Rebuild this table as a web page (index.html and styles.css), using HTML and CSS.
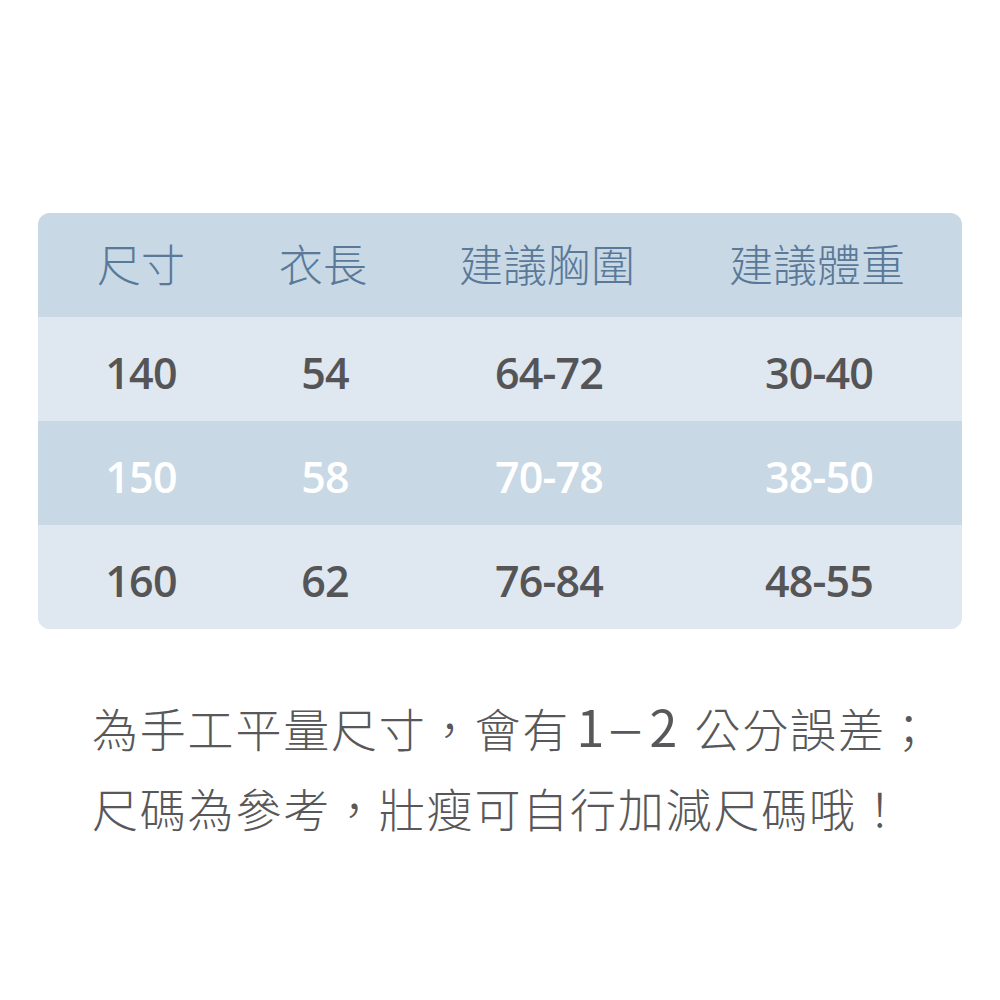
FILE: index.html
```html
<!DOCTYPE html>
<html lang="zh-Hant">
<head>
<meta charset="utf-8">
<link rel="stylesheet" href="styles.css">
</head>
<body>
<div class="page">
  <div class="table">
    <div class="row head">
      <div class="cell">尺寸</div>
      <div class="cell">衣長</div>
      <div class="cell">建議胸圍</div>
      <div class="cell">建議體重</div>
    </div>
    <div class="row light">
      <div class="cell">140</div>
      <div class="cell shift">54</div>
      <div class="cell shift">64-72</div>
      <div class="cell shift">30-40</div>
    </div>
    <div class="row dark">
      <div class="cell">150</div>
      <div class="cell shift">58</div>
      <div class="cell shift">70-78</div>
      <div class="cell shift">38-50</div>
    </div>
    <div class="row light">
      <div class="cell">160</div>
      <div class="cell shift">62</div>
      <div class="cell shift">76-84</div>
      <div class="cell shift">48-55</div>
    </div>
  </div>
  <div class="note">
    <p>為手工平量尺寸，會有<span class="num"><span class="g">1</span><span class="g dash">－</span><span class="g">2</span></span>公分誤差；</p>
    <p>尺碼為參考，壯瘦可自行加減尺碼哦！</p>
  </div>
</div>
</body>
</html>
```

FILE: styles.css
```css
html, body {
  margin: 0;
  padding: 0;
  background: #ffffff;
}
.page {
  width: 1000px;
  height: 1000px;
  padding-top: 213px;
  box-sizing: border-box;
}
.table {
  margin-left: 38px;
  width: 924px;
  border-radius: 12px;
  overflow: hidden;
  background: #dfe7f0;
}
.row {
  display: grid;
  grid-template-columns: 206px 158px 290px 250px 20px;
  height: 104px;
  align-items: center;
}
.row.head {
  background: #c8d8e5;
  color: #5a7999;
  font-family: "Noto Sans CJK TC", "Noto Sans CJK SC", sans-serif;
  font-weight: 300;
  font-size: 44px;
  letter-spacing: 0;
}
.row.head .cell {
  margin-top: -4px;
}
.row.light {
  background: #dfe7f0;
  color: #555456;
}
.row.dark {
  background: #c8d8e5;
  color: #ffffff;
}
.row.light, .row.dark {
  font-family: "Open Sans", "Liberation Sans", sans-serif;
  font-weight: 600;
  font-size: 43px;
  letter-spacing: -0.8px;
}
.row.light .cell, .row.dark .cell {
  margin-top: 6px;
}
.cell {
  text-align: center;
  line-height: 1;
}
.cell.shift {
  padding-left: 4px;
}
.note {
  margin-top: 58px;
  margin-left: 92px;
  font-family: "Noto Sans CJK TC", "Noto Sans CJK SC", sans-serif;
  font-weight: 300;
  font-size: 46px;
  letter-spacing: 1.8px;
  color: #58585a;
}
.note p {
  margin: 0;
  line-height: 77px;
  white-space: nowrap;
}
.num {
  margin-left: 2px;
  margin-right: 13px;
  font-size: 50px;
  font-weight: 400;
  letter-spacing: 0;
}
.num .g {
  display: inline-block;
  width: 36.5px;
  text-align: center;
}
.num .dash {
  font-size: 40px;
  overflow: visible;
  white-space: nowrap;
  text-indent: -3px;
}
```
